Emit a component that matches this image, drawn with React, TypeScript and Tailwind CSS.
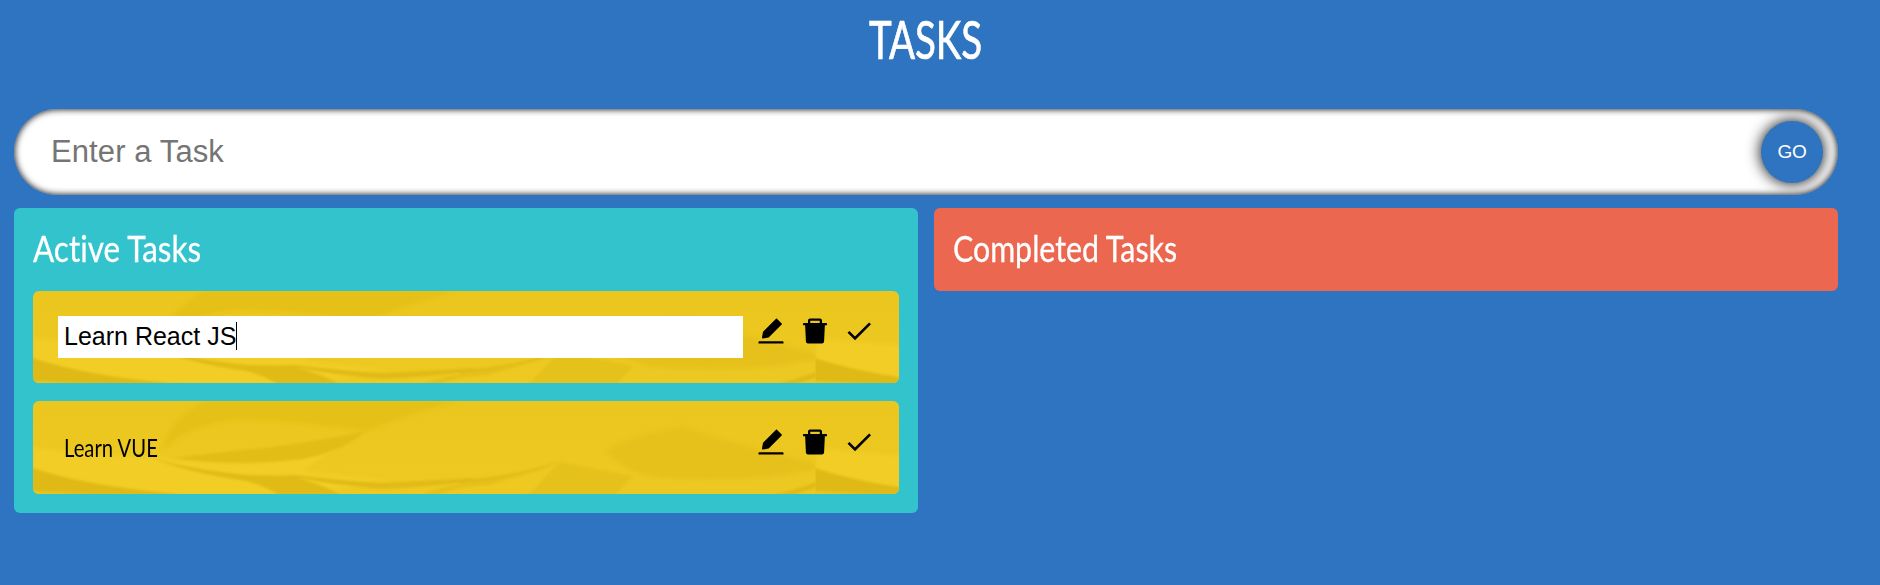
import { AiFillDelete, AiFillEdit } from "react-icons/ai";
import { MdDone } from "react-icons/md";

function Folds() {
  return (
    <g>
      <rect width="783" height="94" fill="url(#base)" />
      <g filter="url(#wide)">
        <path d="M130 50Q134 20 172 0H425Q370 14 333 30Q270 20 205 18Q150 24 130 50Z" fill="#e5c019" />
        <path d="M0 47Q70 54 122 57Q170 61 225 62Q275 58 310 42L270 70Q330 76 360 80L262 94H0V60Z" fill="#f1cd26" />
        <path d="M572 50Q595 34 650 26Q705 44 783 62V69Q700 84 620 76Q590 70 572 50Z" fill="#e6c11b" />
        <path d="M600 74Q690 84 783 72V94H585Z" fill="#ecc822" />
      </g>
      <g filter="url(#fine)">
        <path d="M333 30Q270 44 200 50L140 57Q200 66 270 58Q310 50 333 30Z" fill="#e2bd18" />
        <path d="M-4 66Q50 84 125 91L150 94H-4Z" fill="#dfba17" />
        <path d="M0 90L60 93H0Z" fill="#ecc822" />
        <path d="M118 57Q160 69 215 74Q240 75 262 74Q300 79 350 82Q390 80 440 77V80Q395 86 350 88Q300 84 262 76Q300 87 306 94H246Q230 84 213 80Q160 73 118 57Z" fill="#e0bb17" />
        <path d="M527 61L600 75L582 94H495Z" fill="#e5c11b" />
        <path d="M427 79Q480 76 527 60Q490 78 427 83Z" fill="#e0bb17" />
        <path d="M390 94Q410 83 445 82L520 65L455 84Q420 86 405 94Z" fill="#e5c01a" />
        <path d="M740 94Q765 88 784 81V86L760 94Z" fill="#dfba17" />
      </g>
    </g>
  );
}

function CardArt() {
  return (
    <svg className="absolute inset-0 h-full w-full" viewBox="0 0 866 93" preserveAspectRatio="xMinYMin slice">
      <defs>
        <linearGradient id="base" x2="0" y2="1">
          <stop stopColor="#eac61e" />
          <stop offset="1" stopColor="#edc922" />
        </linearGradient>
        <filter id="wide" x="-5%" y="-20%" width="110%" height="140%"><feGaussianBlur stdDeviation="2.2" /></filter>
        <filter id="fine" x="-5%" y="-20%" width="110%" height="140%"><feGaussianBlur stdDeviation="0.8" /></filter>
      </defs>
      <Folds />
      <svg x="782.5" width="83.5" height="93"><Folds /></svg>
    </svg>
  );
}

function Task({ text, editing }: { text: string; editing?: boolean }) {
  return (
    <div className={`relative flex overflow-hidden rounded-[6px] ${editing ? "h-[92px]" : "h-[93px]"}`}>
      <CardArt />
      <div className="relative flex w-full pl-[25px] pt-[25px]">
        {editing ? (
          <div className="flex h-[42px] w-[685px] items-center bg-white pl-[6px] font-['Liberation_Sans',sans-serif] text-[25px] text-black">
            <span>{text}</span>
            <span className="mb-[2px] h-7 w-px bg-black" />
          </div>
        ) : (
          <div className="flex h-[42px] w-[685px] items-center pl-[6px] pt-px font-['Lato',sans-serif] text-[25px] text-black">
            <span className="origin-left scale-x-[0.81] whitespace-nowrap">{text}</span>
          </div>
        )}
        <div className={`ml-3 flex gap-3 text-[32px] text-black ${editing ? "-mt-px" : ""}`}>
          <AiFillEdit />
          <AiFillDelete />
          <MdDone className="-ml-[0.5px]" />
        </div>
      </div>
    </div>
  );
}

export default function App() {
  return (
    <div className="flex h-[585px] w-[1880px] flex-col bg-[#2f74c0] pl-[14px] pr-[42px]">
      <h1 className="flex h-[109px] shrink-0 justify-center pt-[9px] font-['Lato',sans-serif] text-[52px] leading-[60px] text-white">
        <span className="h-[60px] scale-x-[0.74] [-webkit-text-stroke:0.7px_white]">TASKS</span>
      </h1>
      <form className="flex h-[86px] shrink-0 items-center justify-between overflow-hidden rounded-full bg-white pl-[37px] pr-[15px] font-['Liberation_Sans',sans-serif] shadow-[inset_0_0_7px_black]">
        <span className="text-[31px] tracking-[0.1px] text-[#757575]">Enter a Task</span>
        <button type="button" className="size-[62px] rounded-full bg-[#2f74c0] text-[19px] tracking-[-0.3px] text-white shadow-[0_0_15px_black]">GO</button>
      </form>
      <div className="mt-[13px] flex items-start justify-between">
        <section className="flex h-[305px] w-[904px] flex-col rounded-[6px] bg-[#32c3cd] pl-[19px] pr-[19px] pt-[17px]">
          <h2 className="h-[66px] font-['Lato',sans-serif] text-[37px] leading-[46px] text-white">
            <span className="inline-block origin-left scale-x-[0.85] whitespace-nowrap [-webkit-text-stroke:0.3px_white] [font-variant-ligatures:none]">Active Tasks</span>
          </h2>
          <div className="flex flex-col gap-[18px]">
            <Task text="Learn React JS" editing />
            <Task text="Learn VUE" />
          </div>
        </section>
        <section className="h-[83px] w-[904px] rounded-[6px] bg-[#eb6750] pl-[19px] pt-[17px]">
          <h2 className="font-['Lato',sans-serif] text-[37px] leading-[46px] text-white">
            <span className="inline-block origin-left scale-x-[0.82] whitespace-nowrap [-webkit-text-stroke:0.3px_white] [font-variant-ligatures:none]">Completed Tasks</span>
          </h2>
        </section>
      </div>
    </div>
  );
}
